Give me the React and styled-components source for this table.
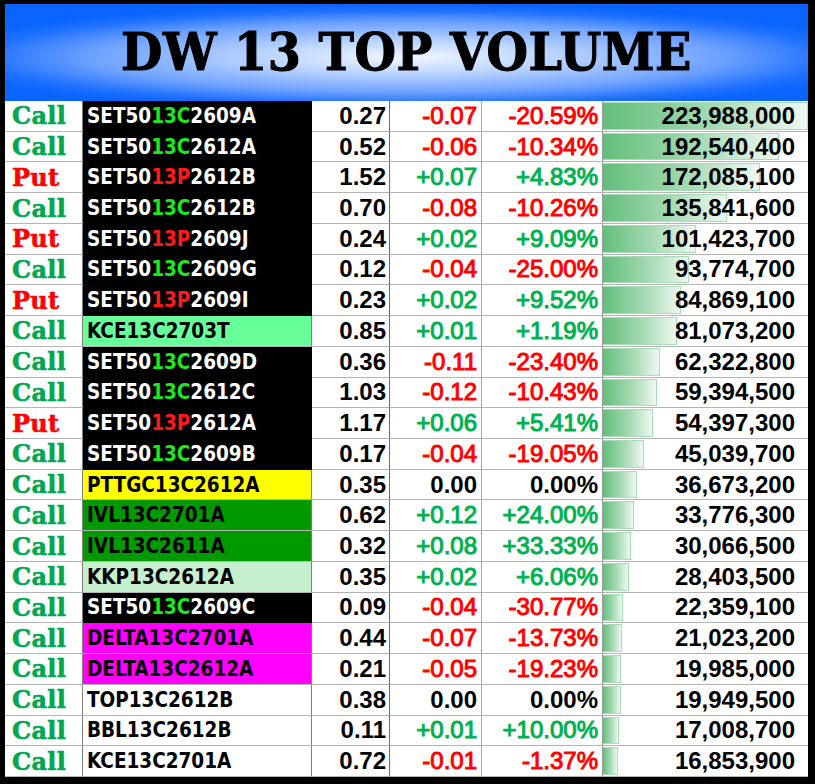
import React from 'react';
import styled, { createGlobalStyle } from 'styled-components';

const GlobalStyle = createGlobalStyle`
  html, body {
    margin: 0;
    padding: 0;
    background: #000;
  }
  * {
    box-sizing: border-box;
  }
`;

const rows = [
  ['Call', 'SET5013C2609A', '0.27', '-0.07', '-20.59%', 223988000, 'black'],
  ['Call', 'SET5013C2612A', '0.52', '-0.06', '-10.34%', 192540400, 'black'],
  ['Put', 'SET5013P2612B', '1.52', '+0.07', '+4.83%', 172085100, 'black'],
  ['Call', 'SET5013C2612B', '0.70', '-0.08', '-10.26%', 135841600, 'black'],
  ['Put', 'SET5013P2609J', '0.24', '+0.02', '+9.09%', 101423700, 'black'],
  ['Call', 'SET5013C2609G', '0.12', '-0.04', '-25.00%', 93774700, 'black'],
  ['Put', 'SET5013P2609I', '0.23', '+0.02', '+9.52%', 84869100, 'black'],
  ['Call', 'KCE13C2703T', '0.85', '+0.01', '+1.19%', 81073200, 'mint'],
  ['Call', 'SET5013C2609D', '0.36', '-0.11', '-23.40%', 62322800, 'black'],
  ['Call', 'SET5013C2612C', '1.03', '-0.12', '-10.43%', 59394500, 'black'],
  ['Put', 'SET5013P2612A', '1.17', '+0.06', '+5.41%', 54397300, 'black'],
  ['Call', 'SET5013C2609B', '0.17', '-0.04', '-19.05%', 45039700, 'black'],
  ['Call', 'PTTGC13C2612A', '0.35', '0.00', '0.00%', 36673200, 'yellow'],
  ['Call', 'IVL13C2701A', '0.62', '+0.12', '+24.00%', 33776300, 'green'],
  ['Call', 'IVL13C2611A', '0.32', '+0.08', '+33.33%', 30066500, 'green'],
  ['Call', 'KKP13C2612A', '0.35', '+0.02', '+6.06%', 28403500, 'pale'],
  ['Call', 'SET5013C2609C', '0.09', '-0.04', '-30.77%', 22359100, 'black'],
  ['Call', 'DELTA13C2701A', '0.44', '-0.07', '-13.73%', 21023200, 'magenta'],
  ['Call', 'DELTA13C2612A', '0.21', '-0.05', '-19.23%', 19985000, 'magenta'],
  ['Call', 'TOP13C2612B', '0.38', '0.00', '0.00%', 19949500, 'white'],
  ['Call', 'BBL13C2612B', '0.11', '+0.01', '+10.00%', 17008700, 'white'],
  ['Call', 'KCE13C2701A', '0.72', '-0.01', '-1.37%', 16853900, 'white'],
];

const nameBg = {
  black: '#000000',
  mint: '#66ff99',
  yellow: '#ffff00',
  green: '#009900',
  pale: '#c6efce',
  magenta: '#ff00ff',
  white: '#ffffff',
};

const Frame = styled.div`
  width: 815px;
  height: 784px;
  border-style: solid;
  border-color: #000;
  border-width: 4px 7px 7px 5px;
  display: flex;
  flex-direction: column;
  background: #fff;
`;

const Header = styled.div`
  height: 97px;
  flex: none;
  display: flex;
  align-items: center;
  justify-content: center;
  padding-bottom: 2px;
  background: radial-gradient(
    ellipse 60% 55% at 50% 55%,
    #f2f7ff 0%,
    #bcd5ff 30%,
    #6fa2ff 65%,
    #1e70ff 88%,
    #0a64ff 100%
  );
`;

const Title = styled.h1`
  margin: 0;
  font-family: 'DejaVu Serif Condensed', 'DejaVu Serif', serif;
  font-weight: 900;
  font-size: 53px;
  letter-spacing: 0.5px;
  color: #000;
  line-height: 1;
  -webkit-text-stroke: 1px #000;
`;

const Table = styled.div`
  flex: 1;
  display: grid;
  grid-template-rows: repeat(22, 1fr);
`;

const Row = styled.div`
  display: grid;
  grid-template-columns: 78px 229px 78px 92px 121px 205px;
  min-height: 0;
`;

const Cell = styled.div`
  display: flex;
  align-items: center;
  justify-content: ${(p) => (p.$left ? 'flex-start' : 'flex-end')};
  border-right: 1px solid ${(p) => p.$line || '#a6a6a6'};
  border-bottom: 1px solid #b4b4b4;
  padding: 0 ${(p) => p.$pr || 5}px 0 ${(p) => p.$pl || 0}px;
  font-family: 'Liberation Sans', Arial, sans-serif;
  font-size: 24px;
  white-space: nowrap;
  overflow: hidden;
`;

const TypeCell = styled(Cell)`
  font-family: 'DejaVu Serif', 'Liberation Serif', serif;
  font-weight: 700;
  font-size: 24px;
  letter-spacing: 0.3px;
  color: ${(p) => (p.$put ? '#ff0000' : '#00a650')};
  border-right-color: #7f7f7f;
  -webkit-text-stroke: 0.6px currentColor;
`;

const NameCell = styled(Cell)`
  background: ${(p) => nameBg[p.$bg]};
  color: ${(p) => (p.$bg === 'black' ? '#ffffff' : '#000000')};
  border-bottom-color: ${(p) => (p.$bg === 'black' ? '#000' : '#b4b4b4')};
  border-right-color: ${(p) => (p.$bg === 'black' ? '#000' : '#7f7f7f')};
  font-family: 'DejaVu Sans Condensed', 'DejaVu Sans', sans-serif;
  font-size: 20.5px;
  font-weight: 700;
`;

const Mid = styled.span`
  color: ${(p) => (p.$put ? '#ff1a1a' : '#1ee81e')};
`;

const Price = styled(Cell)`
  font-weight: 700;
  color: #000;
`;

const Delta = styled(Cell)`
  font-weight: ${(p) => (p.$tone === 'flat' ? 700 : 400)};
  color: ${(p) =>
    p.$tone === 'up' ? '#00b050' : p.$tone === 'down' ? '#ff0000' : '#000'};
  -webkit-text-stroke: ${(p) => (p.$tone === 'flat' ? 0 : 1)}px currentColor;
`;

const VolumeCell = styled(Cell)`
  position: relative;
  font-weight: 700;
  color: #000;
  border-right: none;
  padding-right: 13px;
`;

const Bar = styled.div`
  position: absolute;
  left: 0;
  top: 1px;
  bottom: 1px;
  background: linear-gradient(90deg, #63be7b 0%, #a6dab4 55%, #eef8f1 100%);
  border: 1px solid #a9dcb7;
  border-left: none;
`;

const VolumeText = styled.span`
  position: relative;
`;

const toneOf = (v) => (v.startsWith('+') ? 'up' : v.startsWith('-') ? 'down' : 'flat');

const Name = ({ text, bg }) => {
  const m = text.match(/^(SET50)(13[CP])(.*)$/);
  if (!m || bg !== 'black') return text;
  return (
    <>
      {m[1]}
      <Mid $put={m[2] === '13P'}>{m[2]}</Mid>
      {m[3]}
    </>
  );
};

const App = () => {
  const max = Math.max(...rows.map((r) => r[5]));

  return (
    <>
      <GlobalStyle />
      <Frame>
        <Header>
          <Title>DW 13 TOP VOLUME</Title>
        </Header>
        <Table>
          {rows.map(([type, name, price, chg, pct, vol, bg]) => (
            <Row key={name}>
              <TypeCell $left $pl={7} $put={type === 'Put'}>
                {type}
              </TypeCell>
              <NameCell $left $pl={4} $bg={bg}>
                <Name text={name} bg={bg} />
              </NameCell>
              <Price $pr={3} $line="#6b6b6b">{price}</Price>
              <Delta $pr={4} $tone={toneOf(chg)}>{chg}</Delta>
              <Delta $pr={4} $tone={toneOf(pct)} $line="#9a9a9a">{pct}</Delta>
              <VolumeCell>
                <Bar style={{ width: `${(vol / max) * 100}%` }} />
                <VolumeText>{vol.toLocaleString('en-US')}</VolumeText>
              </VolumeCell>
            </Row>
          ))}
        </Table>
      </Frame>
    </>
  );
};

export default App;
